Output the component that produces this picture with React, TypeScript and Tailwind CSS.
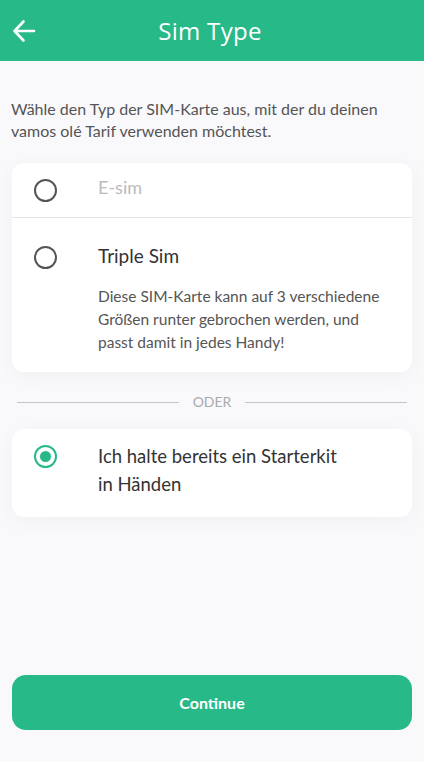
const Radio = ({ checked }: { checked?: boolean }) =>
  checked ? (
    <span className="flex h-[23px] w-[23px] shrink-0 items-center justify-center rounded-full border-[2.5px] border-[#27b987]">
      <span className="block h-[11px] w-[11px] rounded-full bg-[#27b987]" />
    </span>
  ) : (
    <span className="block h-[23px] w-[23px] shrink-0 rounded-full border-2 border-[#555]" />
  )

export default function App() {
  return (
    <div className="flex min-h-[762px] flex-col bg-[#f9f9fc] font-['Lato','Noto_Sans',sans-serif]">
      <header className="flex h-[61px] items-center bg-[#27b987] px-3 relative">
        <svg width="24" height="24" viewBox="0 0 24 24" fill="none" stroke="white" strokeWidth="2.6" strokeLinecap="round" strokeLinejoin="round">
          <path d="M22 12H2.5M11.5 2.5 2.5 12l9 9.5" />
        </svg>
        <h1 className="flex-1 text-center pr-[28px] font-['Open_Sans',sans-serif] text-[24px] tracking-[0.3px] text-white">Sim Type</h1>
      </header>

      <p className="mx-[11px] mt-[37px] text-[16px] leading-[22px] text-[#555]">
        Wähle den Typ der SIM-Karte aus, mit der du deinen vamos olé Tarif verwenden möchtest.
      </p>

      <div className="mx-3 mt-[21px] rounded-xl bg-white shadow-[0_4px_20px_rgba(0,0,0,0.04)]">
        <div className="flex h-[55px] items-center gap-[41px] border-b border-[#e3e3e3] pl-[22px]">
          <Radio />
          <span className="-mt-[6px] text-[18px] text-[#bbb]">E-sim</span>
        </div>
        <div className="flex gap-[41px] pl-[22px] pr-3 pt-[26px] pb-[18px]">
          <div className="pt-[2px]"><Radio /></div>
          <div>
            <div className="text-[19px] leading-[24px] text-[#333]">Triple Sim</div>
            <p className="mt-[17px] max-w-[292px] text-[15.5px] leading-[23px] text-[#555]">
              Diese SIM-Karte kann auf 3 verschiedene Größen runter gebrochen werden, und passt damit in jedes Handy!
            </p>
          </div>
        </div>
      </div>

      <div className="mx-[17px] mt-[21px] flex items-center gap-[14px]">
        <div className="h-px flex-1 bg-[#c4c4c4]" />
        <span className="text-[14px] leading-[18px] text-[#aaa]">ODER</span>
        <div className="h-px flex-1 bg-[#c4c4c4]" />
      </div>

      <div className="mx-3 mt-[18px] flex gap-[41px] rounded-xl bg-white pl-[22px] pt-[13px] pb-[19px] shadow-[0_4px_20px_rgba(0,0,0,0.04)]">
        <div className="pt-[3px]"><Radio checked /></div>
        <p className="text-[18.5px] leading-[28px] text-[#333]">
          Ich halte bereits ein Starterkit
          <br />
          in Händen
        </p>
      </div>

      <div className="flex-1" />

      <button className="mx-3 mb-[32px] h-[55px] rounded-[14px] bg-[#27b987] text-[16px] font-bold text-white">
        Continue
      </button>
    </div>
  )
}
